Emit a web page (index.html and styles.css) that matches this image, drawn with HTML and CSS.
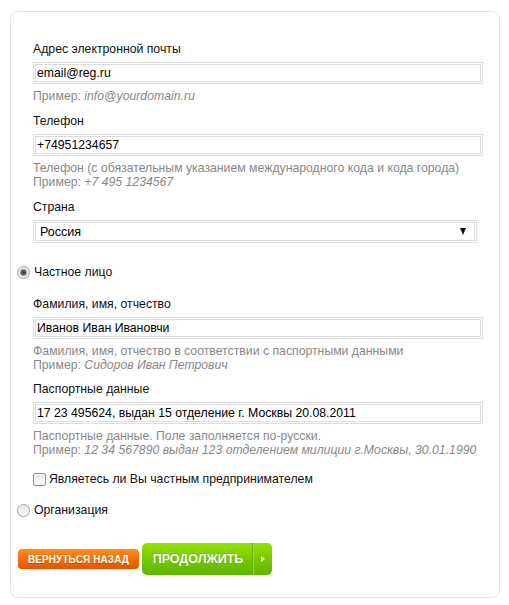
FILE: index.html
```html
<!DOCTYPE html>
<html lang="ru">
<head>
<meta charset="utf-8">
<title>Контактные данные</title>
<link rel="stylesheet" href="styles.css">
</head>
<body>
<form class="card">
  <div class="field">
    <label class="lbl">Адрес электронной почты</label>
    <input class="txt" type="text" value="email@reg.ru">
    <div class="hint">Пример: <i>info@yourdomain.ru</i></div>
  </div>
  <div class="field gap11">
    <label class="lbl">Телефон</label>
    <input class="txt" type="text" value="+74951234657">
    <div class="hint">Телефон (с обязательным указанием международного кода и кода города)<br>Пример: <i>+7 495 1234567</i></div>
  </div>
  <div class="field gap11">
    <label class="lbl">Страна</label>
    <div class="select"><span>Россия</span><span class="arrow"></span></div>
  </div>

  <label class="radio-row r1"><input class="radio" type="radio" name="type" checked><span>Частное лицо</span></label>

  <div class="person">
    <div class="field">
      <label class="lbl">Фамилия, имя, отчество</label>
      <input class="txt" type="text" value="Иванов Иван Ивановчи">
      <div class="hint">Фамилия, имя, отчество в соответствии с паспортными данными<br>Пример: <i>Сидоров Иван Петрович</i></div>
    </div>
    <div class="field gap10">
      <label class="lbl">Паспортные данные</label>
      <input class="txt" type="text" value="17 23 495624, выдан 15 отделение г. Москвы 20.08.2011">
      <div class="hint">Паспортные данные. Поле заполняется по-русски.<br>Пример: <i>12 34 567890 выдан 123 отделением милиции г.Москвы, 30.01.1990</i></div>
    </div>
    <label class="check-row"><input class="check" type="checkbox"><span>Являетесь ли Вы частным предпринимателем</span></label>
  </div>

  <label class="radio-row r2"><input class="radio" type="radio" name="type"><span>Организация</span></label>

  <div class="buttons">
    <button type="button" class="btn-back">ВЕРНУТЬСЯ НАЗАД</button>
    <button type="button" class="btn-next"><span class="next-text">ПРОДОЛЖИТЬ</span><span class="next-arrow"></span></button>
  </div>
</form>
</body>
</html>
```
FILE: styles.css
```css
html, body {
  margin: 0;
  padding: 0;
  background: #fff;
}
body {
  font-family: "Liberation Sans", Arial, sans-serif;
  font-size: 12.25px;
  color: #111;
}
.card {
  box-sizing: border-box;
  width: 490px;
  height: 587px;
  margin: 11px 0 0 10px;
  border: 1px solid #e4e4e4;
  border-radius: 8px;
  padding: 30px 16px 21px 6px;
}
.field {
  margin-left: 16px;
}
.person .field {
  margin-left: 0;
}
.gap11 { margin-top: 11px; }
.gap10 { margin-top: 10px; }
.lbl {
  display: block;
  line-height: 15px;
  margin-bottom: 5px;
  color: #111;
}
.txt {
  display: block;
  box-sizing: border-box;
  width: 450px;
  height: 22px;
  margin: 0;
  padding: 0 0 0 1px;
  border: 3px double #dcdcdc;
  font-family: "Liberation Sans", Arial, sans-serif;
  font-size: 12.25px;
  color: #000;
  background: #fff;
  outline: none;
}
.hint {
  margin-top: 5px;
  line-height: 14px;
  color: #888;
}
.hint i {
  font-style: italic;
}
.select {
  box-sizing: border-box;
  width: 444px;
  height: 23px;
  border: 3px double #dcdcdc;
  display: flex;
  align-items: center;
  justify-content: space-between;
  padding: 0 8px 0 4px;
  font-size: 12.5px;
  color: #000;
}
.arrow {
  width: 0;
  height: 0;
  border-left: 3.5px solid transparent;
  border-right: 3.5px solid transparent;
  border-top: 7px solid #111;
}
.radio-row, .check-row {
  display: flex;
  align-items: center;
  line-height: 15px;
  cursor: pointer;
}
.r1 { margin-top: 22px; }
.person {
  margin: 17px 0 0 16px;
}
.check-row {
  margin-top: 15px;
}
.r2 { margin-top: 16px; }
.radio {
  -webkit-appearance: none;
  appearance: none;
  box-sizing: border-box;
  width: 13px;
  height: 13px;
  margin: 0 4px 0 0;
  border: 1px solid #a3a3a3;
  border-radius: 50%;
  background: linear-gradient(#e4e4e4, #fbfbfb);
  box-shadow: inset 0 0 0 1px #f4f4f4;
}
.radio:checked {
  background: radial-gradient(circle, #3c3c3c 0, #555 2px, #9a9a9a 3px, #dedede 4px, #f6f6f6 6px);
}
.check {
  -webkit-appearance: none;
  appearance: none;
  box-sizing: border-box;
  width: 13px;
  height: 13px;
  margin: 0 3px 0 0;
  border: 1px solid #959595;
  border-radius: 2px;
  background: linear-gradient(#e6e6e6, #fdfdfd);
  box-shadow: inset 0 0 0 1px #f2f2f2;
}
.buttons {
  margin-top: 25px;
  display: flex;
  align-items: center;
  gap: 3px;
  padding-left: 1px;
}
.btn-back {
  box-sizing: border-box;
  width: 121px;
  height: 20px;
  padding: 0;
  border: 0;
  border-radius: 4px;
  background: linear-gradient(#ff8f1a, #f26a00 60%, #e35400);
  color: #fff;
  font-family: "Liberation Sans", Arial, sans-serif;
  font-weight: bold;
  font-size: 10px;
  letter-spacing: 0.1px;
  text-shadow: 0 1px 0 rgba(150, 50, 0, 0.5);
  cursor: pointer;
}
.btn-next {
  box-sizing: border-box;
  width: 130px;
  height: 32px;
  padding: 0;
  border: 0;
  border-radius: 5px;
  background: linear-gradient(#95e300, #72c800 55%, #5fb400);
  color: #fff;
  display: flex;
  align-items: stretch;
  font-family: "Liberation Sans", Arial, sans-serif;
  font-weight: bold;
  font-size: 12.5px;
  text-shadow: 0 0 1px rgba(60, 110, 0, 0.7);
  cursor: pointer;
}
.next-text {
  width: 108px;
  display: flex;
  align-items: center;
  justify-content: center;
  padding-left: 2px;
  border-right: 1px solid #62ad00;
}
.next-arrow {
  flex: 1;
  display: flex;
  align-items: center;
  justify-content: center;
  border-left: 1px solid #9be61a;
}
.next-arrow::before {
  content: "";
  width: 0;
  height: 0;
  border-top: 3px solid transparent;
  border-bottom: 3px solid transparent;
  border-left: 4px solid #fff;
}
```
